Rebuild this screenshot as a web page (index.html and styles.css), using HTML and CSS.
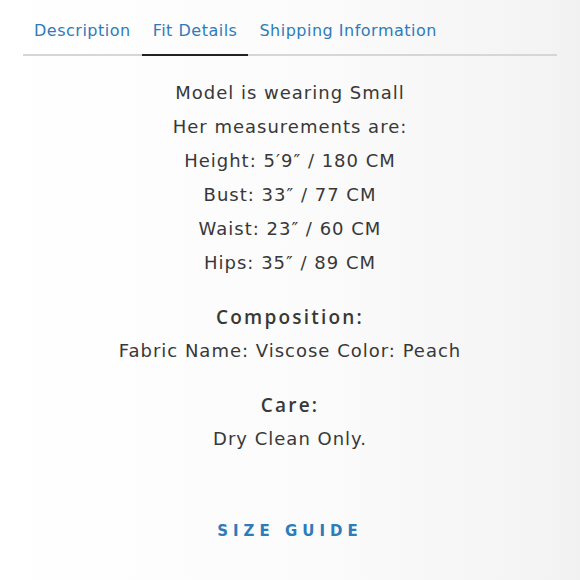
FILE: index.html
```html
<!DOCTYPE html>
<html lang="en">

<head>
  <meta charset="UTF-8">
  <meta name="viewport" content="width=device-width, initial-scale=1.0">
  <title>Fit Details</title>
  <link rel="stylesheet" href="styles.css">
</head>

<body>

  <div class="container">
    <ul class="tabs">
      <li class="tab">Description</li>
      <li class="tab active">Fit Details</li>
      <li class="tab">Shipping Information</li>
    </ul>

    <div class="panel">
      <p>Model is wearing Small</p>
      <p>Her measurements are:</p>
      <p>Height: 5′9″ / 180 CM</p>
      <p>Bust: 33″ / 77 CM</p>
      <p>Waist: 23″ / 60 CM</p>
      <p>Hips: 35″ / 89 CM</p>

      <h3>Composition:</h3>
      <p>Fabric Name: Viscose Color: Peach</p>

      <h3>Care:</h3>
      <p>Dry Clean Only.</p>

      <a href="#" class="size-guide">SIZE GUIDE</a>
    </div>
  </div>

</body>

</html>
```

FILE: styles.css
```css
html,
body {
  height: 100%;
}

body {
  margin: 0;
  font-family: "DejaVu Sans", sans-serif;
  color: #383838;
  background: linear-gradient(to right, #ffffff 0%, #fbfbfb 55%, #f4f4f4 93%, #f1f1f1 100%);
}

.container {
  padding: 0 23px;
}

.tabs {
  list-style: none;
  margin: 0;
  padding: 17px 0 0;
  display: flex;
  border-bottom: 2px solid #d6d6d6;
}

.tab {
  padding: 4px 11px 14px;
  margin-bottom: -2px;
  font-size: 16px;
  letter-spacing: 0.5px;
  color: #2e7bb9;
  border-bottom: 2px solid transparent;
}

.tab.active {
  border-bottom-color: #222;
}

.panel {
  text-align: center;
  padding-top: 20px;
}

.panel p {
  margin: 0;
  font-size: 18px;
  letter-spacing: 1px;
  line-height: 34px;
}

.panel h3 {
  margin: 20px 0 0;
  font-family: "Open Sans", sans-serif;
  font-size: 19px;
  font-weight: 600;
  letter-spacing: 2.2px;
  line-height: 34px;
}

.size-guide {
  display: inline-block;
  margin-top: 66px;
  font-size: 15px;
  font-weight: bold;
  letter-spacing: 5px;
  color: #2e7bb9;
  text-decoration: none;
}
```
